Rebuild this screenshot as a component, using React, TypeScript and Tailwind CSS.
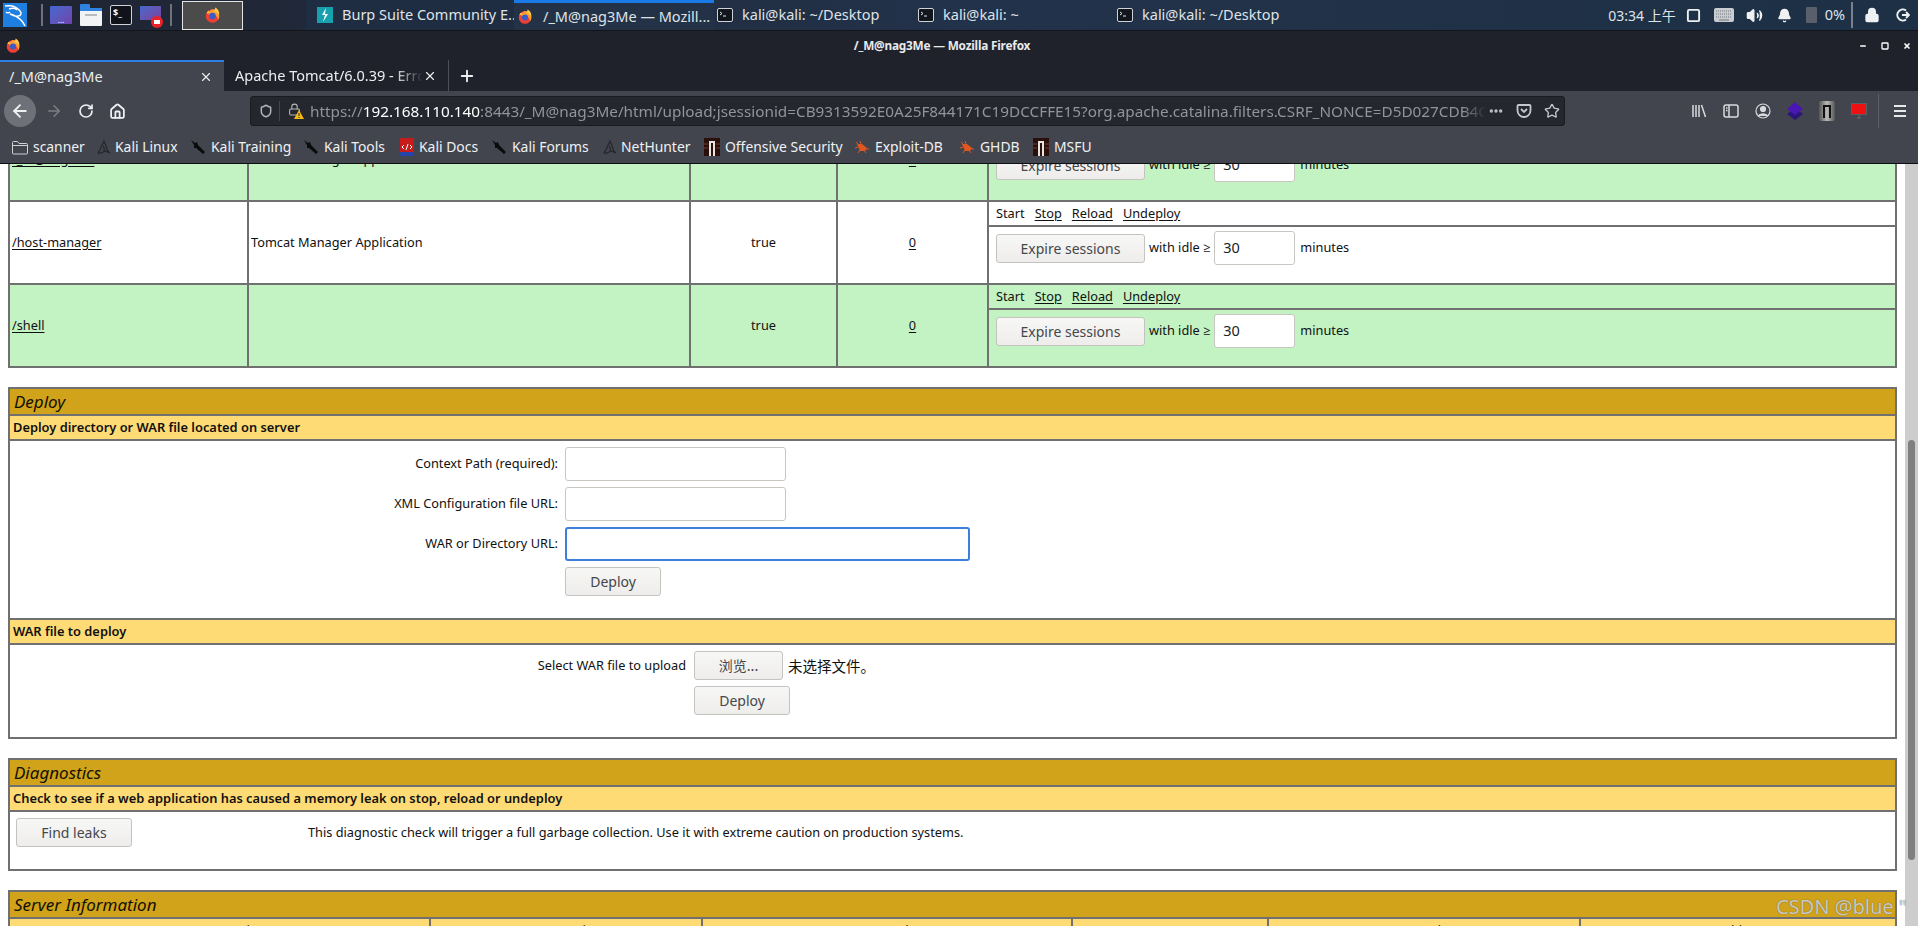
import React from "react";
import { ArrowLeft, ArrowRight, RotateCw, Home, Shield, Lock, Star, MoreHorizontal, Plus, X, Volume2, Bell, Square, Minus } from "lucide-react";

const Firefox = ({ s = 16 }: { s?: number }) => (
  <svg width={s} height={s} viewBox="0 0 32 32" className="shrink-0">
    <circle cx="15" cy="18" r="13.500" fill="#ef3f34" />
    <path d="M15 4.500a13.500 13.500 0 0 1 13.500 13.500c0 3-1 5.500-2.500 8-1-6-5-11-11-12-4-.5-7 0-9 2 1-6 4-10 9-11.500z" fill="#ff9a2e" />
    <circle cx="15" cy="18" r="6.500" fill="#3a5cc9" />
    <path d="M20 1c1 4-1 6-5 8 6-1 11 2 13 8 2-6-2-14-8-16z" fill="#ffc94a" />
    <path d="M3 13c1-3 3-5 5-6-1 2 0 4 2 4-3 1-5 2-7 2z" fill="#ffc94a" />
  </svg>
);

const Term = () => (
  <svg width="16" height="16" viewBox="0 0 16 16" className="shrink-0">
    <rect x=".5" y="1.500" width="15" height="13" rx="1.500" fill="#11151c" stroke="#cfd3d8" />
    <path d="M3 5l2 1.500L3 8M6 9h3" stroke="#e5e7eb" fill="none" />
  </svg>
);

const Drop = () => (
  <svg width="16" height="16" viewBox="0 0 16 16" className="shrink-0 -mr-[2px]">
    <path d="M8 2c-1 3-3 5-3.500 8L2 14c3 1 5-1 7-2l5 2c-2-1-3-3-3.500-5C10 6 9 4 8 2zM7 7c1 1 1.500 3 1 5" fill="none" stroke="#24262b" strokeWidth="1.200" />
  </svg>
);
const Sword = () => (
  <svg width="16" height="16" viewBox="0 0 16 16" className="shrink-0">
    <path d="M1 1l4 3 2-1 1 3 7 7-2 2-7-6-2 0 0-3z" fill="#0b0b0b" />
  </svg>
);
const Offsec = () => (
  <svg width="16" height="18" viewBox="0 0 16 18" className="shrink-0">
    <rect width="16" height="18" fill="#2a100c" />
    <path d="M5 18V3h6v15h-2V5H7v13z" fill="#e8e4e0" />
    <path d="M0 6h4M0 10h4M12 6h4M12 10h4" stroke="#7a3a2a" />
  </svg>
);
const Bug = () => (
  <svg width="16" height="16" viewBox="0 0 16 16" className="shrink-0">
    <path d="M3 5l5 0 5 4-2 3-5 0z" fill="#e0561e" />
    <path d="M2 3l3 3M6 2l1 3M1 9l3-1M4 14l2-3M12 14l-2-3M15 10l-3 0" stroke="#d85a28" />
  </svg>
);
const Docs = () => (
  <svg width="14" height="18" viewBox="0 0 14 18" className="shrink-0">
    <rect width="14" height="18" rx="1" fill="#c61c1c" />
    <rect y="14" width="14" height="4" fill="#2446a8" />
    <path d="M4 7l-2 2 2 2M10 7l2 2-2 2M8 6l-2 6" stroke="#fff" fill="none" />
  </svg>
);
const FolderIcon = () => (
  <svg width="16" height="15" viewBox="0 0 16 15" className="shrink-0" fill="none" stroke="#cfd1d5">
    <path d="M.5 13V2.500c0-.6.4-1 1-1h4l1.500 2h7.500c.6 0 1 .4 1 1V13c0 .6-.4 1-1 1h-13c-.6 0-1-.4-1-1zM.5 5.500h15" />
  </svg>
);

const Book = ({ icon, text, w }: { icon: React.ReactNode; text: string; w: string }) => (
  <div className={`flex items-center gap-[5px] ${w} shrink-0`}>
    {icon}
    <span className="text-[13.900px] text-[#f0f1f3] whitespace-nowrap">{text}</span>
  </div>
);

const Btn = ({ children, w, h = "h-[29px]" }: { children: React.ReactNode; w: string; h?: string }) => (
  <div className={`${w} ${h} shrink-0 rounded-[3px] border border-[#c5c3bf] bg-gradient-to-b from-[#f7f7f6] to-[#eeedeb] flex items-center justify-center text-[14px] text-[#45474b]`}>
    {children}
  </div>
);

const Input = ({ w, focus }: { w: string; focus?: boolean }) => (
  <div className={`${w} h-[34px] shrink-0 rounded-[3px] bg-white ${focus ? "border-2 border-[#3d80d8]" : "border border-[#c9c6c1]"}`} />
);

const Link = ({ children }: { children: React.ReactNode }) => <span className="underline underline-offset-2">{children}</span>;

const line = "border-[#707070]";

const AppRow = ({ name, green, desc }: { name: string; green?: boolean; desc: string }) => (
  <div className={`flex h-[83px] border-b-2 ${line} ${green ? "bg-[#c3f3c3]" : "bg-white"}`}>
    <div className={`w-[239px] shrink-0 flex items-center pl-[2px] border-r-2 ${line}`}><Link>{name}</Link></div>
    <div className={`w-[442px] shrink-0 flex items-center pl-[2px] border-r-2 ${line}`}>{desc}</div>
    <div className={`w-[147px] shrink-0 flex items-center justify-center border-r-2 ${line}`}>true</div>
    <div className={`w-[151px] shrink-0 flex items-center justify-center border-r-2 ${line}`}><Link>0</Link></div>
    <div className="flex-1 flex flex-col">
      <div className={`h-[25px] shrink-0 flex items-center pl-[7px] gap-[10px] border-b-2 ${line}`}>
        <span>Start</span>
        <Link>Stop</Link>
        <Link>Reload</Link>
        <Link>Undeploy</Link>
      </div>
      <div className="flex items-center pl-[7px] pt-[4px] gap-[4px]">
        <Btn w="w-[149px]">Expire sessions</Btn>
        <span>with idle ≥</span>
        <div className="w-[81px] h-[34px] rounded-[3px] bg-white border border-[#c9c6c1] flex items-center pl-[8px] text-[14.500px] text-[#222]">30</div>
        <span className="ml-[1px]">minutes</span>
      </div>
    </div>
  </div>
);

const Title = ({ children }: { children: React.ReactNode }) => (
  <div className={`h-[27px] bg-[#d0a31a] border-b-2 ${line} flex items-center pl-[4px] text-[17px] italic text-[#141000]`}>{children}</div>
);
const Sub = ({ children }: { children?: React.ReactNode }) => (
  <div className={`h-[25px] bg-[#ffdb75] border-b-2 ${line} flex items-center pl-[3px] font-semibold text-[12.850px]`}>{children}</div>
);

const Label = ({ children }: { children: React.ReactNode }) => (
  <div className="w-[548px] shrink-0 text-right">{children}</div>
);

export default function App() {
  return (
    <div className="w-[1918px] h-[926px] relative overflow-hidden flex flex-col bg-white font-['Noto_Sans','Open_Sans',sans-serif]">
      {/* desktop panel */}
      <div className="h-[31px] shrink-0 flex items-center bg-gradient-to-r from-[#1f2431] via-[#22324a] to-[#1d3045] border-b border-[#12151b] text-[#dfe3e8] text-[14.500px]">
        <div className="w-[41px] shrink-0 pl-[3px] flex items-center">
          <svg width="24" height="24" viewBox="0 0 24 24">
            <rect width="24" height="24" fill="#1e7fe0" />
            <path d="M2 3c6-1 12 1 15 5 2 2 1 5-2 5-3 1-6-1-8-2 4 1 8 3 11 6 2 2 3 4 4 6M6 6c3-1 6-1 8 1M3 9c1 1 3 1 4 0" stroke="#fff" strokeWidth="1.500" fill="none" />
          </svg>
        </div>
        <div className="w-[2px] h-[22px] bg-[#6d727b] shrink-0" />
        <div className="flex items-center gap-[8px] pl-[7px] w-[127px] shrink-0">
          <div className="w-[22px] h-[18px] rounded-[1px] bg-gradient-to-br from-[#3f69cf] to-[#6e44ac] flex items-end justify-center text-[8px] leading-[9px] text-white">...</div>
          <div className="w-[22px] h-[22px] flex flex-col">
            <div className="w-[10px] h-[4px] bg-[#2f82e0] rounded-t-[1px]" />
            <div className="flex-1 bg-[#f2f3f5] border-t-[3px] border-[#2f82e0] rounded-b-[1px] flex justify-center pt-[3px]"><div className="w-[12px] h-[2px] bg-[#b9bbbf]" /></div>
          </div>
          <div className="w-[22px] h-[20px] rounded-[2px] bg-[#10131a] border border-[#cfd3d8] text-[9px] leading-[14px] font-bold pl-[2px] text-white">$_</div>
          <div className="w-[22px] h-[20px] relative">
            <div className="w-[21px] h-[15px] bg-gradient-to-br from-[#3f69cf] to-[#7a3f9c] border-t border-[#222]" />
            <div className="absolute right-[-1px] bottom-[-3px] w-[12px] h-[12px] rounded-full bg-[#e8232c] flex items-center justify-center"><div className="w-[6px] h-[4px] bg-white" /></div>
          </div>
        </div>
        <div className="w-[2px] h-[22px] bg-[#6d727b] shrink-0" />
        <div className="w-[10px] shrink-0" />
        <div className="w-[61px] h-[29px] shrink-0 border border-[#e5e5e5] bg-[#4b4b4b] flex items-center justify-center"><Firefox s={16} /></div>
        <div className="w-[63px] shrink-0" />
        <div className="w-[208px] h-full shrink-0 flex items-center pl-[11px] gap-[9px] bg-[#1f2d42] overflow-hidden">
          <div className="w-[16px] h-[16px] shrink-0 bg-[#17a0ad] flex items-center justify-center">
            <svg width="8" height="14" viewBox="0 0 8 14"><path d="M5 0L1 7h3l-2 7 5-8H4z" fill="#fff" /></svg>
          </div>
          <span className="whitespace-nowrap">Burp Suite Community E...</span>
        </div>
        <div className="w-[200px] h-full shrink-0 flex items-center pl-[4px] gap-[10px] bg-[#233246] border-t-[3px] border-[#1a7ae8]">
          <Firefox s={15} />
          <span className="whitespace-nowrap">/_M@nag3Me — Mozill...</span>
        </div>
        <div className="w-[200px] shrink-0 flex items-center pl-[3px] gap-[9px]"><Term /><span>kali@kali: ~/Desktop</span></div>
        <div className="w-[200px] shrink-0 flex items-center pl-[4px] gap-[9px]"><Term /><span>kali@kali: ~</span></div>
        <div className="w-[200px] shrink-0 flex items-center pl-[3px] gap-[9px]"><Term /><span className="whitespace-nowrap">kali@kali: ~/Desktop</span></div>
        <div className="flex-1 flex items-center justify-end pr-[8px]">
          <span className="whitespace-nowrap font-['Noto_Sans','Noto_Sans_CJK_SC',sans-serif] text-[14px] mr-[10px]">03:34 上午</span>
          <Square size={15} strokeWidth={3} className="text-[#eef0f2] mr-[13px]" />
          <svg width="20" height="14" viewBox="0 0 20 14" className="mr-[12px] shrink-0">
            <rect width="20" height="14" rx="2" fill="#c9cdd2" />
            <path d="M2 3h16M2 6h16M2 9h16" stroke="#6f747b" strokeDasharray="1 1" />
            <path d="M5 12h10" stroke="#6f747b" />
          </svg>
          <Volume2 size={17} fill="#eef0f2" className="text-[#eef0f2] mr-[14px]" />
          <Bell size={15} fill="#eef0f2" className="text-[#eef0f2] mr-[14px]" />
          <div className="w-[11px] h-[16px] bg-[#59606b] rounded-[1px] mr-[8px]" />
          <span className="mr-[6px]">0%</span>
          <div className="w-[2px] h-[26px] bg-[#7b818a] mr-[11px]" />
          <Lock size={16} fill="#eef0f2" className="text-[#eef0f2] mr-[16px]" />
          <svg width="14" height="14" viewBox="0 0 14 14" fill="none" stroke="#eef0f2" strokeWidth="2" className="shrink-0"><path d="M10 2.500A5.500 5.500 0 1 0 10 11.500" /><path d="M6 7h7M10 4l3 3-3 3" strokeWidth="1.800" /></svg>
        </div>
      </div>

      {/* firefox titlebar + tabs */}
      <div className="h-[60px] shrink-0 bg-[#1f222b] flex flex-col">
        <div className="h-[29px] shrink-0 flex items-center px-[6px] text-white">
          <Firefox s={15} />
          <div className="flex-1 text-center pl-[4px] text-[11.800px] font-bold text-[#e9eaec] -tracking-[0.2px]">/_M@nag3Me — Mozilla Firefox</div>
          <div className="flex items-center gap-[14px] pr-[1px]">
            <Minus size={8} strokeWidth={4} />
            <Square size={8} strokeWidth={4} />
            <X size={8} strokeWidth={5} />
          </div>
        </div>
        <div className="h-[31px] shrink-0 flex items-stretch text-[14.500px] text-[#eceef0]">
          <div className="w-[224px] shrink-0 bg-[#42454e] border-t-2 border-[#2d7fe8] flex items-center pl-[9px] pr-[11px] justify-between">
            <span>/_M@nag3Me</span>
            <X size={14} />
          </div>
          <div className="w-[225px] shrink-0 flex items-center pl-[11px] pr-[11px] justify-between border-r border-[#4c4f57]">
            <span className="w-[188px] overflow-hidden whitespace-nowrap [mask-image:linear-gradient(90deg,#000_85%,transparent)]">Apache Tomcat/6.0.39 - Error report</span>
            <X size={14} />
          </div>
          <div className="pl-[9px] flex items-center"><Plus size={18} strokeWidth={2.500} /></div>
        </div>
      </div>

      {/* nav bar */}
      <div className="h-[40px] shrink-0 bg-[#42454e] flex items-center text-[#eef0f2]">
        <div className="ml-[4px] w-[32px] h-[32px] rounded-full bg-[#6f7179] flex items-center justify-center"><ArrowLeft size={20} strokeWidth={2.200} /></div>
        <ArrowRight size={18} className="ml-[9px] text-[#7d7f86]" />
        <RotateCw size={16} strokeWidth={2.500} className="ml-[15px]" />
        <Home size={17} strokeWidth={2.500} className="ml-[15px]" />
        <div className="ml-[124px] w-[1315px] h-[30px] shrink-0 rounded-[3px] bg-[#25272f] border border-[#191b20] flex items-center pl-[8px] pr-[6px]">
          <Shield size={14} strokeWidth={2.500} className="text-[#b4b6bb] shrink-0" />
          <div className="w-px h-[20px] bg-[#44464e] ml-[6px] mr-[8px] shrink-0" />
          <div className="w-[16px] h-[16px] relative shrink-0 mr-[6px]">
            <Lock size={13} className="text-[#b4b6bb]" />
            <svg width="10" height="9" viewBox="0 0 10 9" className="absolute right-0 bottom-0"><path d="M5 0l5 9H0z" fill="#f5b914" /><path d="M5 3v3M5 7v1" stroke="#222" /></svg>
          </div>
          <div className="w-[1176px] shrink-0 overflow-hidden whitespace-nowrap text-[15.300px] text-[#92949a] [mask-image:linear-gradient(90deg,#000_98%,transparent)]">
            https://<span className="text-white">192.168.110.140</span>:8443/_M@nag3Me/html/upload;jsessionid=CB9313592E0A25F844171C19DCCFFE15?org.apache.catalina.filters.CSRF_NONCE=D5D027CDB4C0E8F1A2
          </div>
          <MoreHorizontal size={16} strokeWidth={3} className="ml-[2px] text-[#c5c7cc] shrink-0" />
          <svg width="16" height="16" viewBox="0 0 16 16" fill="none" stroke="#c5c7cc" strokeWidth="1.800" className="ml-[12px] shrink-0"><path d="M2.500 2h11c.6 0 1 .4 1 1v4.500a6.500 6.500 0 0 1-13 0V3c0-.6.4-1 1-1z" /><path d="M5 6l3 3 3-3" /></svg>
          <Star size={16} strokeWidth={2} className="ml-[12px] text-[#c5c7cc] shrink-0" />
        </div>
        <div className="w-[126px] shrink-0" />
        <div className="flex items-center gap-[16px] text-[#d8dadd]">
          <svg width="16" height="16" viewBox="0 0 16 16" stroke="currentColor" strokeWidth="1.500"><path d="M2 2v12M5 2v12M8 2v12M10.500 2l4 12" /></svg>
          <svg width="16" height="16" viewBox="0 0 16 16" stroke="currentColor" fill="none" strokeWidth="1.500"><rect x="1" y="2" width="14" height="12" rx="2" /><path d="M6 2v12M3 5h1.500M3 7.500h1.500" /></svg>
          <svg width="16" height="16" viewBox="0 0 16 16" stroke="currentColor" fill="none" strokeWidth="1.200"><circle cx="8" cy="8" r="7" /><circle cx="8" cy="6" r="2.500" fill="currentColor" /><path d="M3 13c2-3 8-3 10 0" fill="currentColor" /></svg>
          <svg width="16" height="18" viewBox="0 0 16 18"><path d="M8 6l8 6-8 6-8-6z" fill="#2a1679" /><path d="M8 0l8 7-8 6-8-6z" fill="#4a17b5" /></svg>
          <div className="w-[16px] h-[20px] rounded-[2px] bg-gradient-to-r from-[#555] via-[#bbb] to-[#555] flex items-center justify-center"><div className="w-[8px] h-[13px] border-2 border-b-0 border-[#111]" /></div>
          <svg width="16" height="16" viewBox="0 0 16 16"><rect x="0" y="0" width="16" height="12" fill="#5b5d63" /><rect x="1" y="1" width="14" height="10" fill="#ee1111" /><path d="M6 15h4M8 12v3" stroke="#6b6d73" /></svg>
        </div>
        <div className="w-px h-[34px] bg-[#5d6068] ml-[11px] mr-[15px]" />
        <svg width="12" height="12" viewBox="0 0 12 12" stroke="#e8e9eb" strokeWidth="2" className="shrink-0"><path d="M0 1h12M0 6h12M0 11h12" /></svg>
      </div>

      {/* bookmarks */}
      <div className="h-[33px] shrink-0 bg-[#42454e] border-b border-[#0e0f12] flex items-center pl-[12px] pt-[1px]">
        <Book w="w-[84px]" icon={<FolderIcon />} text="scanner" />
        <Book w="w-[94px]" icon={<Drop />} text="Kali Linux" />
        <Book w="w-[113px]" icon={<Sword />} text="Kali Training" />
        <Book w="w-[97px]" icon={<Sword />} text="Kali Tools" />
        <Book w="w-[91px]" icon={<Docs />} text="Kali Docs" />
        <Book w="w-[111px]" icon={<Sword />} text="Kali Forums" />
        <Book w="w-[102px]" icon={<Drop />} text="NetHunter" />
        <Book w="w-[150px]" icon={<Offsec />} text="Offensive Security" />
        <Book w="w-[105px]" icon={<Bug />} text="Exploit-DB" />
        <Book w="w-[74px]" icon={<Bug />} text="GHDB" />
        <Book w="w-[80px]" icon={<Offsec />} text="MSFU" />
      </div>

      {/* page */}
      <div className="flex-1 min-h-0 overflow-hidden flex text-[12.750px] text-[#111]">
        <div className="flex-1 min-w-0 pl-[8px] pr-[8px] flex flex-col">
          <div className={`shrink-0 -mt-[45px] mb-[19px] border-l-2 border-r-2 ${line}`}>
            <AppRow name="/_M@nag3Me" green desc="Tomcat Manager Application" />
            <AppRow name="/host-manager" desc="Tomcat Manager Application" />
            <AppRow name="/shell" green desc="" />
          </div>

          <div className={`shrink-0 border-2 ${line} mb-[19px]`}>
            <Title>Deploy</Title>
            <Sub>Deploy directory or WAR file located on server</Sub>
            <div className={`h-[179px] border-b-2 ${line} flex flex-col pt-[6px] gap-[6px]`}>
              <div className="flex items-center gap-[7px]"><Label>Context Path (required):</Label><Input w="w-[221px]" /></div>
              <div className="flex items-center gap-[7px]"><Label>XML Configuration file URL:</Label><Input w="w-[221px]" /></div>
              <div className="flex items-center gap-[7px]"><Label>WAR or Directory URL:</Label><Input w="w-[405px]" focus /></div>
              <div className="pl-[555px]"><Btn w="w-[96px]">Deploy</Btn></div>
            </div>
            <Sub>WAR file to deploy</Sub>
            <div className="h-[92px] flex flex-col pt-[6px] gap-[6px]">
              <div className="flex items-center">
                <div className="w-[684px] shrink-0 text-right pr-[8px]">Select WAR file to upload</div>
                <Btn w="w-[89px]"><span className="font-['Noto_Sans_CJK_SC',sans-serif]">浏览...</span></Btn>
                <span className="ml-[5px] text-[14.500px] font-['Noto_Sans_CJK_SC',sans-serif]">未选择文件。</span>
              </div>
              <div className="pl-[684px]"><Btn w="w-[96px]">Deploy</Btn></div>
            </div>
          </div>

          <div className={`shrink-0 border-2 ${line} mb-[19px]`}>
            <Title>Diagnostics</Title>
            <Sub>Check to see if a web application has caused a memory leak on stop, reload or undeploy</Sub>
            <div className="h-[57px] flex items-start pt-[6px] pl-[6px]">
              <Btn w="w-[116px]">Find leaks</Btn>
              <span className="ml-[176px] mt-[5px]">This diagnostic check will trigger a full garbage collection. Use it with extreme caution on production systems.</span>
            </div>
          </div>

          <div className={`shrink-0 border-2 ${line}`}>
            <Title>Server Information</Title>
            <div className="h-[30px] bg-[#ffdb75] flex text-center">
              <div className={`w-[421px] shrink-0 pt-[2px] border-r-2 ${line}`}>Tomcat Version</div>
              <div className={`w-[272px] shrink-0 pt-[2px] border-r-2 ${line}`}>JVM Version</div>
              <div className={`w-[370px] shrink-0 pt-[2px] border-r-2 ${line}`}>JVM Vendor</div>
              <div className={`w-[196px] shrink-0 pt-[2px] border-r-2 ${line}`}>OS Name</div>
              <div className={`w-[312px] shrink-0 pt-[2px] border-r-2 ${line}`}>OS Version</div>
              <div className="flex-1 pt-[2px]">OS Architecture</div>
            </div>
          </div>
        </div>
        {/* scrollbar */}
        <div className="w-[13px] shrink-0 bg-[#cdcdcd] flex flex-col">
          <div className="h-[276px] shrink-0" />
          <div className="h-[420px] w-[7px] shrink-0 ml-[3px] rounded-[4px] bg-[#7f7f7f]" />
        </div>
      </div>

      <div className="absolute right-[11px] bottom-[7px] text-[20px] leading-[24px] text-white/70 [text-shadow:0_0_1px_#444]">CSDN @blue "</div>
    </div>
  );
}
